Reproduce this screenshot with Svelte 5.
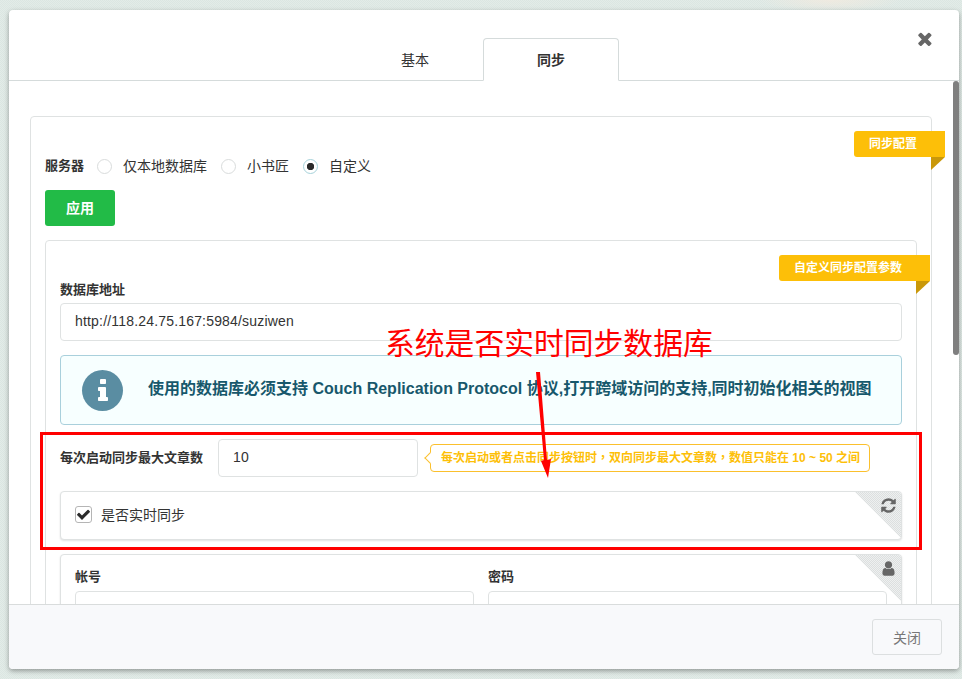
<script>
  const servers = [
    { label: "仅本地数据库", checked: false },
    { label: "小书匠", checked: false },
    { label: "自定义", checked: true },
  ]
  const refreshIcon = "M1639 1056q0 5-1 7-64 268-268 434.5t-478 166.5q-146 0-282.5-55t-243.5-157l-129 129q-19 19-45 19t-45-19-19-45v-448q0-26 19-45t45-19h448q26 0 45 19t19 45-19 45l-137 137q71 66 161 102t187 36q134 0 250-65t186-179q11-17 53-117 8-23 30-23h192q13 0 22.5 9.5t9.5 22.5zm25-800v448q0 26-19 45t-45 19h-448q-26 0-45-19t-19-45 19-45l138-138q-148-137-349-137-134 0-250 65t-186 179q-11 17-53 117-8 23-30 23h-199q-13 0-22.5-9.5t-9.5-22.5v-7q65-268 270-434.5t480-166.5q146 0 284 55.5t245 156.5l130-129q19-19 45-19t45 19 19 45z"
  const userIcon = "M1536 1399q0 109-62.5 187t-150.5 78h-854q-88 0-150.5-78t-62.5-187q0-85 8.5-160.5t31.5-152 58.5-131 94-89 134.5-34.5q131 128 313 128t313-128q76 0 134.5 34.5t94 89 58.5 131 31.5 152 8.5 160.5zm-256-887q0 159-112.5 271.5t-271.5 112.5-271.5-112.5-112.5-271.5 112.5-271.5 271.5-112.5 271.5 112.5 112.5 271.5z"
</script>

<div class="page">
  <div class="modal">
    <div class="head">
      <div class="tabs">
        <div class="tab">基本</div>
        <div class="tab active">同步</div>
      </div>
      <svg class="close" viewBox="0 0 1792 1792"><path d="M1298 1202q0 40-28 68l-136 136q-28 28-68 28t-68-28l-294-294-294 294q-28 28-68 28t-68-28l-136-136q-28-28-28-68t28-68l294-294-294-294q-28-28-28-68t28-68l136-136q28-28 68-28t68 28l294 294 294-294q28-28 68-28t68 28l136 136q28 28 28 68t-28 68l-294 294 294 294q28 28 28 68z" /></svg>
    </div>

    <div class="body">
      <div class="card outer">
        <div class="ribbon">同步配置</div>
        <div class="server-row">
          <span class="label">服务器</span>
          {#each servers as s}
            <span class="radio" class:on={s.checked}></span>
            <span class="radio-text">{s.label}</span>
          {/each}
        </div>
        <button class="apply">应用</button>

        <div class="card inner">
          <div class="ribbon">自定义同步配置参数</div>
          <div class="label stacked db-label">数据库地址</div>
          <input class="field" value="http://118.24.75.167:5984/suziwen" readonly />

          <div class="alert">
            <div class="alert-icon">
              <svg viewBox="448 100 768 1528"><path d="M1152 1376v128q0 26-19 45t-45 19h-512q-26 0-45-19t-19-45v-128q0-26 19-45t45-19h64v-384h-64q-26 0-45-19t-19-45v-128q0-26 19-45t45-19h384q26 0 45 19t19 45v576h64q26 0 45 19t19 45zm-128-1152v192q0 26-19 45t-45 19h-256q-26 0-45-19t-19-45v-192q0-26 19-45t45-19h256q26 0 45 19t19 45z" /></svg>
            </div>
            <div class="alert-text">使用的数据库必须支持 Couch Replication Protocol 协议,打开跨域访问的支持,同时初始化相关的视图</div>
          </div>

          <div class="max-row">
            <span class="label">每次启动同步最大文章数</span>
            <input class="field short" value="10" readonly />
            <span class="tip">每次启动或者点击同步按钮时，双向同步最大文章数，数值只能在 10 ~ 50 之间</span>
          </div>

          <div class="card sub check-card">
            <div class="corner"></div>
            <svg class="corner-icon" viewBox="0 0 1792 1792"><path d={refreshIcon} /></svg>
            <span class="checkbox">
              <svg viewBox="0 0 1792 1792"><path d="M1671 566q0 40-28 68l-724 724-136 136q-28 28-68 28t-68-28l-136-136-362-362q-28-28-28-68t28-68l136-136q28-28 68-28t68 28l294 295 656-657q28-28 68-28t68 28l136 136q28 28 28 68z" /></svg>
            </span>
            <span class="radio-text">是否实时同步</span>
          </div>

          <div class="card sub account">
            <div class="corner"></div>
            <svg class="corner-icon" viewBox="0 0 1792 1792"><path d={userIcon} /></svg>
            <div class="cols">
              <div>
                <div class="label stacked">帐号</div>
                <input class="field" readonly />
              </div>
              <div>
                <div class="label stacked">密码</div>
                <input class="field" readonly />
              </div>
            </div>
          </div>
        </div>
      </div>
    </div>

    <div class="thumb"></div>

    <div class="foot">
      <button class="dismiss">关闭</button>
    </div>
  </div>

  <!-- red annotations drawn over the screenshot -->
  <div class="note">系统是否实时同步数据库</div>
  <div class="note-box"></div>
  <svg class="note-arrow" viewBox="0 0 962 679">
    <path d="M536 372 L540 372 L547 460 L551 459 L548 478 L541 461 L544 460 Z" />
  </svg>
</div>

<style>
  :global(body) {
    margin: 0;
    background: #dfe9e5;
  }
  .page {
    position: relative;
    width: 962px;
    height: 679px;
    padding: 10px 3px 10px 9px;
    box-sizing: border-box;
    overflow: hidden;
    font-family: "Liberation Sans", "Noto Sans CJK SC", sans-serif;
    font-size: 14px;
    color: #333;
    background: radial-gradient(ellipse 70px 12px at 830px 0, #efeae0, transparent) no-repeat,
      repeating-conic-gradient(#e3ece8 0 25%, #dbe6e2 0 50%) 0 0 / 2px 2px;
  }
  .modal {
    position: relative;
    height: 659px;
    display: flex;
    flex-direction: column;
    background: #fff;
    border-radius: 4px;
    box-shadow: 0 2px 5px rgba(0, 0, 0, 0.35);
    overflow: hidden;
  }
  .head {
    position: relative;
    flex: none;
    height: 71px;
    box-sizing: border-box;
    border-bottom: 1px solid #d5dbdb;
  }
  .tabs {
    display: flex;
    justify-content: center;
    padding: 28px 2px 0 0;
  }
  .tab {
    width: 136px;
    height: 43px;
    box-sizing: border-box;
    border: 1px solid transparent;
    border-radius: 4px 4px 0 0;
    text-align: center;
    line-height: 42px;
    color: #333;
  }
  .tab.active {
    border-color: #d5dbdb;
    border-bottom-color: #fff;
    background: #fff;
    font-weight: 700;
  }
  .close {
    position: absolute;
    top: 20px;
    right: 22px;
    width: 20px;
    height: 20px;
    fill: #666;
  }
  .body {
    flex: 1;
    min-height: 0;
    overflow: hidden;
    padding: 35px 27px 0 21px;
    box-sizing: border-box;
  }
  .thumb {
    position: absolute;
    top: 71px;
    right: 0;
    width: 6px;
    height: 274px;
    border-radius: 3px;
    background: #7f7f7f;
  }
  .card {
    position: relative;
    border: 1px solid #dfe2e2;
    border-radius: 4px;
    background: #fff;
    box-sizing: border-box;
  }
  .outer {
    padding: 39px 14px 14px;
  }
  .inner {
    margin-top: 14px;
    padding: 38px 14px 14px;
  }
  .sub {
    margin-top: 14px;
    overflow: hidden;
    box-shadow: 0 1px 2px rgba(0, 0, 0, 0.12);
  }
  .ribbon {
    position: absolute;
    top: 14px;
    right: -14px;
    height: 26px;
    padding: 0 28px 0 15px;
    background: #fdbf08;
    border-radius: 3px 0 0 3px;
    color: #fff;
    font-size: 12px;
    font-weight: 700;
    line-height: 26px;
  }
  .ribbon::after {
    content: "";
    position: absolute;
    right: 0;
    top: 26px;
    border-style: solid;
    border-width: 13px 14px 0 0;
    border-color: #c9980a transparent transparent transparent;
  }
  .label {
    font-size: 13px;
    font-weight: 700;
    color: #333;
    line-height: 20px;
  }
  .stacked {
    margin-bottom: 4px;
  }
  .db-label {
    padding-top: 1px;
    margin-bottom: 3px;
  }
  .server-row {
    display: flex;
    align-items: center;
    height: 20px;
  }
  .server-row .label {
    margin-right: -1px;
  }
  .radio {
    width: 15px;
    height: 15px;
    margin-left: 14px;
    box-sizing: border-box;
    border: 1px solid #d9dcdc;
    border-radius: 50%;
    background: #fff;
  }
  .radio.on {
    border-color: #a6d2da;
    background: radial-gradient(circle, #2b2b2b 0 3.4px, #fff 4px);
  }
  .radio-text {
    margin-left: 11px;
    font-size: 14px;
    line-height: 20px;
  }
  .apply {
    display: block;
    width: 70px;
    height: 36px;
    margin-top: 14px;
    padding: 0 0 2px;
    border: 0;
    border-radius: 3px;
    background: #22bb47;
    color: #fff;
    font: 700 14px "Liberation Sans", "Noto Sans CJK SC", sans-serif;
  }
  .field {
    display: block;
    width: 100%;
    height: 38px;
    box-sizing: border-box;
    padding: 0 14px 2px;
    border: 1px solid #dfe2e2;
    border-radius: 4px;
    background: #fff;
    color: #333;
    font: 14px "Liberation Sans", "Noto Sans CJK SC", sans-serif;
    letter-spacing: 0.18px;
    outline: none;
  }
  .alert {
    display: flex;
    align-items: center;
    height: 70px;
    box-sizing: border-box;
    margin-top: 14px;
    padding: 0 21px;
    border: 1px solid #a9d0dc;
    border-radius: 4px;
    background: #f7ffff;
  }
  .alert-icon {
    flex: none;
    display: flex;
    align-items: center;
    justify-content: center;
    width: 41px;
    height: 41px;
    border-radius: 50%;
    background: #5a8da2;
  }
  .alert-icon svg {
    width: 12px;
    height: 24px;
    fill: #fff;
  }
  .alert-text {
    margin: -6px 0 0 25px;
    color: #17586c;
    font-size: 16px;
    font-weight: 700;
    white-space: nowrap;
  }
  .max-row {
    display: flex;
    align-items: center;
    margin-top: 14px;
  }
  .short {
    flex: none;
    width: 200px;
    margin-left: 15px;
  }
  .tip {
    position: relative;
    margin-left: 12px;
    height: 28px;
    box-sizing: border-box;
    padding: 0 9px 0 10px;
    border: 1px solid #fbc02d;
    border-radius: 4px;
    color: #fdbf08;
    font-family: "Liberation Sans", "Noto Sans CJK TC", sans-serif;
    font-size: 12px;
    font-weight: 700;
    line-height: 26px;
    white-space: nowrap;
  }
  .tip::before {
    content: "";
    position: absolute;
    left: -5px;
    top: 9px;
    width: 7px;
    height: 7px;
    background: #fff;
    border-left: 1px solid #fbc02d;
    border-bottom: 1px solid #fbc02d;
    transform: rotate(45deg);
  }
  .check-card {
    display: flex;
    align-items: center;
    height: 49px;
    padding: 0 14px 2px;
  }
  .check-card .radio-text {
    margin-left: 9px;
  }
  .checkbox {
    display: flex;
    align-items: center;
    justify-content: center;
    width: 17px;
    height: 17px;
    box-sizing: border-box;
    border: 1px solid #b5b5b5;
    border-radius: 3px;
  }
  .checkbox svg {
    width: 15px;
    height: 15px;
    fill: #2b2b2b;
  }
  .corner {
    position: absolute;
    top: -1px;
    right: -1px;
    width: 48px;
    height: 48px;
    clip-path: polygon(0 0, 100% 0, 100% 100%);
    background-image: repeating-conic-gradient(#dcdfdf 0 25%, #eef0f0 0 50%);
    background-size: 2px 2px;
  }
  .corner-icon {
    position: absolute;
    top: 5px;
    right: 4px;
    width: 17px;
    height: 17px;
    fill: #666;
  }
  .account {
    padding: 12px 14px 14px;
  }
  .cols {
    display: grid;
    grid-template-columns: 1fr 1fr;
    gap: 14px;
  }
  .foot {
    flex: none;
    display: flex;
    align-items: center;
    justify-content: flex-end;
    height: 65px;
    box-sizing: border-box;
    padding-right: 17px;
    border-top: 1px solid #d9dcdc;
    background: #f8f9fb;
  }
  .dismiss {
    width: 70px;
    height: 36px;
    border: 1px solid #dcdfe0;
    border-radius: 3px;
    background: #f8f9fb;
    color: #777;
    font: 14px "Liberation Sans", "Noto Sans CJK SC", sans-serif;
  }
  .note {
    position: absolute;
    left: 385px;
    top: 323px;
    color: #ff0000;
    font-size: 29.8px;
    line-height: 42px;
    white-space: nowrap;
  }
  .note-box {
    position: absolute;
    left: 40px;
    top: 432px;
    width: 882px;
    height: 118px;
    box-sizing: border-box;
    border: 3px solid #ff0000;
  }
  .note-arrow {
    position: absolute;
    left: 0;
    top: 0;
    width: 962px;
    height: 679px;
    fill: #ff0000;
  }
</style>
